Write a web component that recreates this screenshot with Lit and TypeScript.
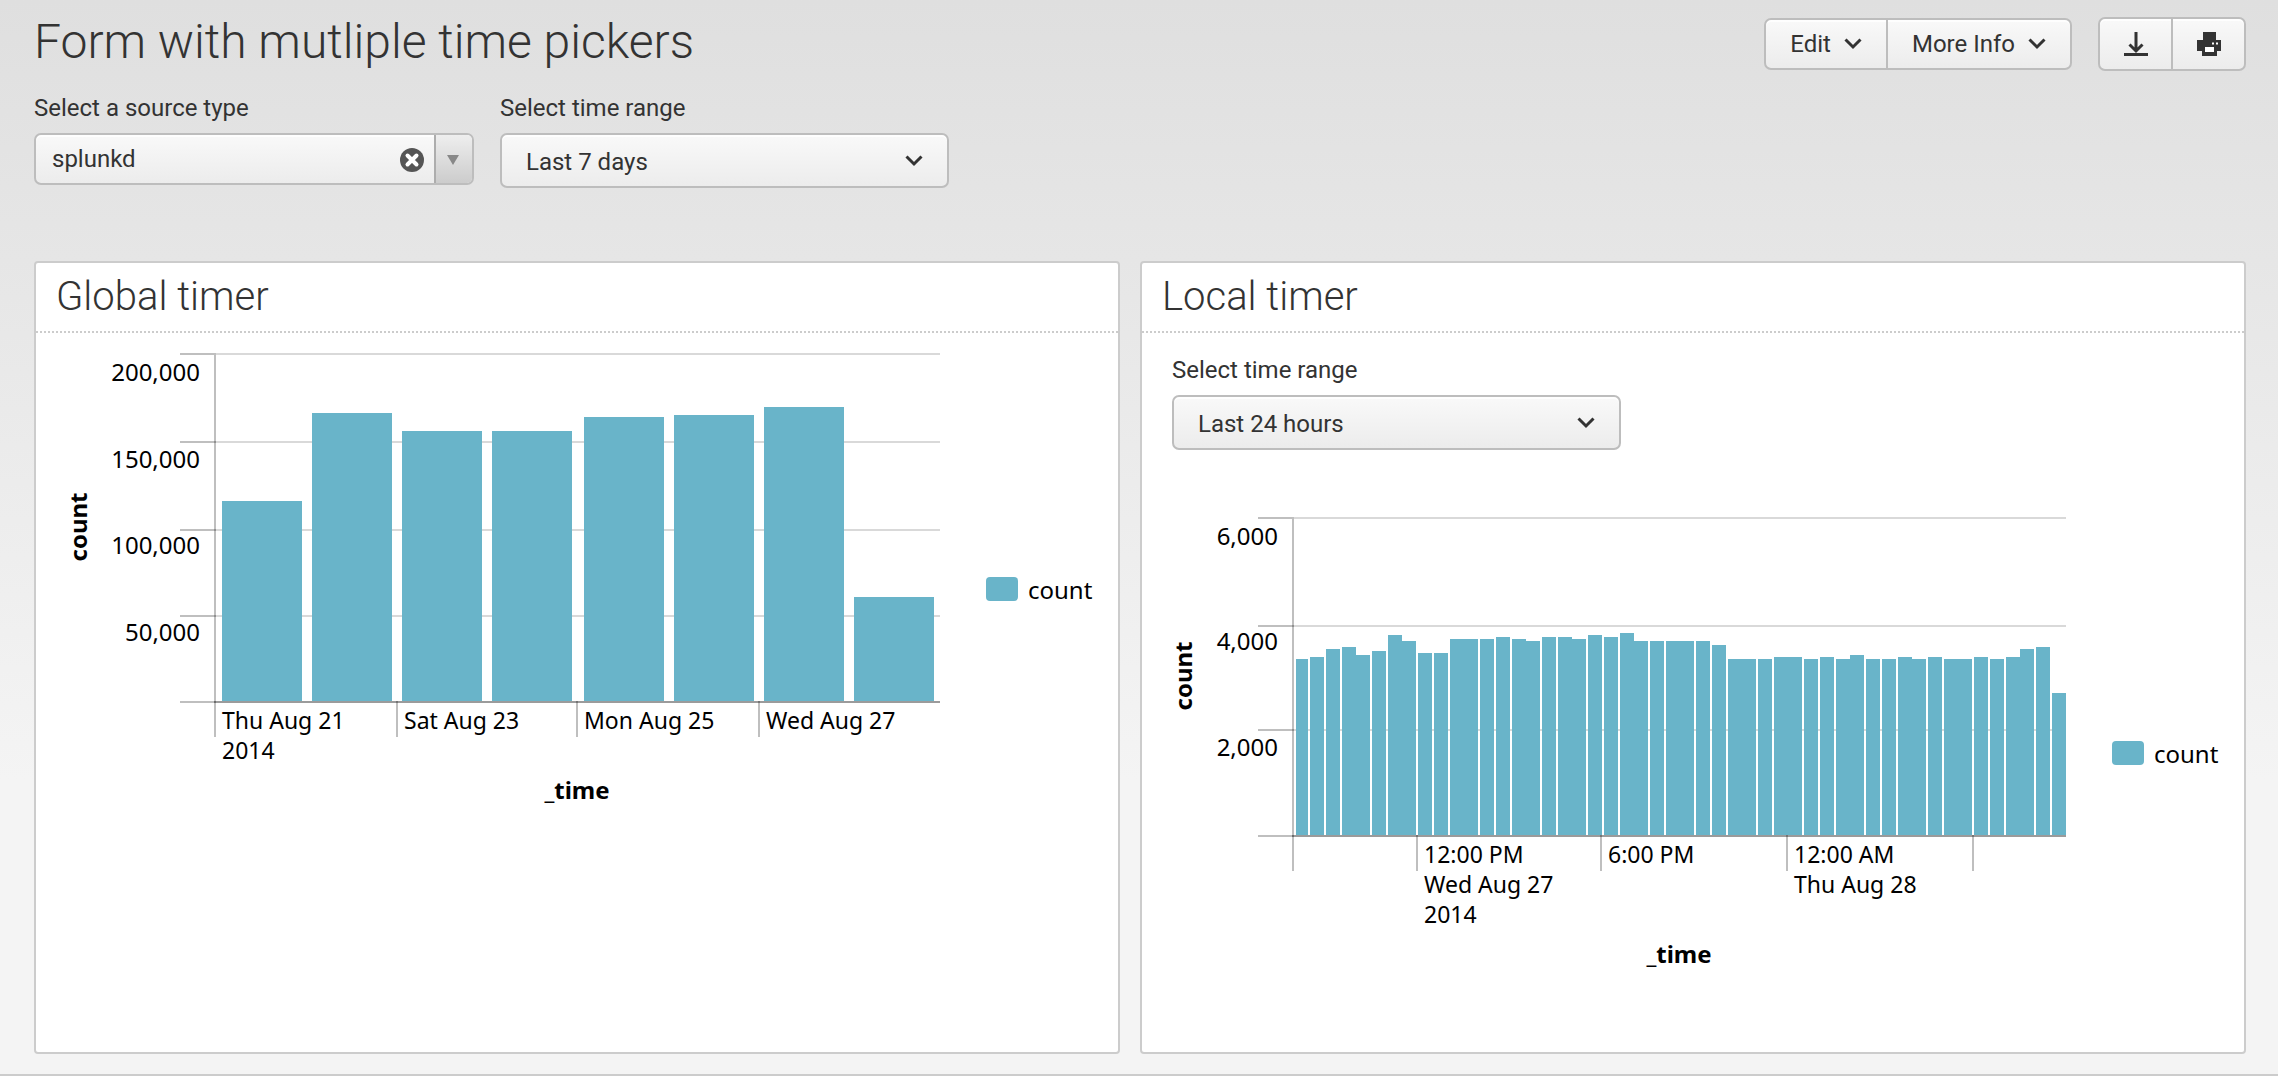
import { LitElement, html, svg, css } from "lit";
import { customElement, property } from "lit/decorators.js";

interface TickLabel {
  x: number;
  lines: string[];
}

interface ChartSpec {
  name: string;
  width: number;
  height: number;
  plotLeft: number;
  plotRight: number;
  top: number;
  base: number;
  max: number;
  barStart: number;
  barStep: number;
  barWidth: number;
  values: number[];
  grid: { y: number; label: string; baseline: number }[];
  ticks: TickLabel[];
  titleX: number;
  titleY: number;
  legendX: number;
}

const GLOBAL_CHART: ChartSpec = {
  name: "Events per day, last 7 days",
  width: 1082,
  height: 560,
  plotLeft: 178,
  plotRight: 904,
  top: 20,
  base: 368,
  max: 200000,
  barStart: 186,
  barStep: 90.5,
  barWidth: 80,
  values: [114900, 165500, 155200, 155200, 163200, 164400, 169000, 59800],
  grid: [
    { y: 20, label: "200,000", baseline: 48 },
    { y: 108, label: "150,000", baseline: 135 },
    { y: 196, label: "100,000", baseline: 221 },
    { y: 282, label: "50,000", baseline: 308 },
  ],
  ticks: [
    { x: 178, lines: ["Thu Aug 21", "2014"] },
    { x: 360, lines: ["Sat Aug 23"] },
    { x: 540, lines: ["Mon Aug 25"] },
    { x: 722, lines: ["Wed Aug 27"] },
  ],
  titleX: 51,
  titleY: 466,
  legendX: 950,
};

const LOCAL_CHART: ChartSpec = {
  name: "Events per half hour, last 24 hours",
  width: 1102,
  height: 520,
  plotLeft: 150,
  plotRight: 924,
  top: 20,
  base: 338,
  max: 6000,
  barStart: 153.88,
  barStep: 15.44,
  barWidth: 14,
  values: [
    3320, 3360, 3510, 3550, 3400, 3470, 3770, 3660, 3430, 3430,
    3700, 3700, 3700, 3740, 3700, 3660, 3740, 3740, 3700, 3770,
    3740, 3810, 3660, 3660, 3660, 3660, 3660, 3580, 3320, 3320,
    3320, 3360, 3360, 3320, 3360, 3320, 3400, 3320, 3320, 3360,
    3320, 3360, 3320, 3320, 3360, 3320, 3360, 3510, 3550, 2680,
  ],
  grid: [
    { y: 20, label: "6,000", baseline: 48 },
    { y: 128, label: "4,000", baseline: 153 },
    { y: 232, label: "2,000", baseline: 259 },
  ],
  ticks: [
    { x: 150, lines: [] },
    { x: 274, lines: ["12:00 PM", "Wed Aug 27", "2014"] },
    { x: 458, lines: ["6:00 PM"] },
    { x: 644, lines: ["12:00 AM", "Thu Aug 28"] },
    { x: 830, lines: [] },
  ],
  titleX: 50,
  titleY: 466,
  legendX: 970,
};

const chevron = html`<svg class="chevron" width="18" height="12" viewBox="0 0 18 12" aria-hidden="true">
  <path d="M1.5 1.5 L9 9 L16.5 1.5" fill="none" stroke="#333" stroke-width="3" />
</svg>`;

@customElement("column-chart")
export class ColumnChart extends LitElement {
  @property({ attribute: false }) spec!: ChartSpec;

  static styles = css`
    :host {
      display: block;
    }
    .plot {
      display: block;
      width: 100%;
      height: auto;
      font-family: "Noto Sans", "Open Sans", sans-serif;
      font-size: 24px;
      fill: #000;
    }
    .edge {
      shape-rendering: crispEdges;
    }
    .grid {
      fill: #d9d9d9;
    }
    .tick {
      fill: rgba(0, 0, 0, 0.25);
    }
    .axis {
      fill: #9b9b9b;
    }
    .bar,
    .swatch {
      fill: #69b4c9;
    }
    .time {
      font-size: 23px;
    }
    .title {
      font-weight: 700;
    }
  `;

  render() {
    const s = this.spec;
    const firstX = s.plotLeft + 4;
    const centerX = (s.plotLeft + s.plotRight) / 2;
    const centerY = (s.top + s.base) / 2;
    const legendY = s.top + 224;
    return html`
      <svg class="plot" viewBox="0 0 ${s.width} ${s.height}" role="img" aria-label=${s.name}>
        <g class="edge">
          ${s.grid.map(
            (g) => svg`
              <rect class="grid" x=${s.plotLeft + 2} y=${g.y} width=${s.plotRight - s.plotLeft - 2} height="2" />
              <rect class="tick" x=${s.plotLeft - 34} y=${g.y} width="36" height="2" />`,
          )}
          <rect class="tick" x=${s.plotLeft - 34} y=${s.base} width="36" height="2" />
          <rect class="tick" x=${s.plotLeft} y=${s.top + 2} width="2" height=${s.base - s.top} />
          ${s.values.map((v, i) => {
            const slot = 2 * Math.floor((s.barStart + i * s.barStep) / 2);
            const x = Math.max(slot, firstX);
            const h = Math.round((v / s.max) * (s.base - s.top));
            return svg`<rect class="bar" x=${x} y=${s.base - h} width=${slot + s.barWidth - x} height=${h} />`;
          })}
          <rect class="axis" x=${s.plotLeft + 2} y=${s.base} width=${s.plotRight - s.plotLeft - 2} height="2" />
          ${s.ticks.map((t) => svg`<rect class="tick" x=${t.x} y=${s.base} width="2" height="36" />`)}
        </g>
        ${s.grid.map(
          (g) => svg`<text x=${s.plotLeft - 14} y=${g.baseline} text-anchor="end">${g.label}</text>`,
        )}
        ${s.ticks.map((t) =>
          t.lines.map((line, i) => svg`<text class="time" x=${t.x + 8} y=${s.base + 28 + i * 30}>${line}</text>`),
        )}
        <text class="title" x=${centerX} y=${s.titleY} text-anchor="middle">_time</text>
        <text class="title" transform="translate(${s.titleX} ${centerY}) rotate(-90)" text-anchor="middle">count</text>
        <rect class="swatch" x=${s.legendX} y=${legendY} width="32" height="24" rx="4" />
        <text x=${s.legendX + 42} y=${legendY + 22}>count</text>
      </svg>
    `;
  }
}

@customElement("time-range")
export class TimeRange extends LitElement {
  @property() value = "";

  static styles = css`
    :host {
      display: block;
      width: 449px;
      font-family: Roboto, "Liberation Sans", sans-serif;
      font-size: 24px;
      line-height: 28px;
      color: #333;
    }
    .label {
      display: block;
      margin-bottom: 11px;
    }
    .field {
      display: grid;
      align-items: center;
    }
    .select,
    .chevron {
      grid-area: 1 / 1;
    }
    .select {
      appearance: none;
      box-sizing: border-box;
      width: 100%;
      height: 55px;
      margin: 0;
      padding: 2px 60px 0 24px;
      border: 2px solid #bdbdbd;
      border-radius: 7px;
      background: linear-gradient(#f9f9f9, #ececec);
      box-shadow: inset 0 2px 0 rgba(255, 255, 255, 0.8);
      font: inherit;
      color: inherit;
    }
    .chevron {
      justify-self: end;
      margin-right: 26px;
      pointer-events: none;
    }
  `;

  render() {
    return html`
      <label class="label" for="range">Select time range</label>
      <div class="field">
        <select class="select" id="range">
          <option selected>${this.value}</option>
        </select>
        ${chevron}
      </div>
    `;
  }
}

@customElement("app-root")
export class AppRoot extends LitElement {
  static styles = css`
    :host {
      display: block;
      box-sizing: border-box;
      min-height: 100vh;
      border-bottom: 2px solid #ccc;
      background: #f4f4f4 linear-gradient(#dfdfdf, #f4f4f4 780px);
      font-family: Roboto, "Liberation Sans", sans-serif;
      font-size: 24px;
      line-height: 28px;
      color: #333;
    }
    .page {
      padding: 17px 32px 20px 34px;
    }
    .header {
      display: flex;
      justify-content: space-between;
      align-items: flex-start;
    }
    .heading {
      margin: 0;
      font-size: 48px;
      font-weight: 300;
      line-height: 50px;
    }
    .toolbar {
      display: flex;
      align-items: center;
      gap: 26px;
    }
    .group {
      display: flex;
    }
    .button {
      display: flex;
      align-items: center;
      justify-content: center;
      gap: 13px;
      box-sizing: border-box;
      height: 52px;
      margin: 0;
      padding: 0 24px;
      border: 2px solid #bdbdbd;
      background: linear-gradient(#f9f9f9, #ececec);
      box-shadow: inset 0 2px 0 rgba(255, 255, 255, 0.8);
      font: inherit;
      color: inherit;
    }
    .button:first-child {
      border-radius: 7px 0 0 7px;
    }
    .button:last-child {
      border-left: 0;
      border-radius: 0 7px 7px 0;
    }
    .icon {
      height: 54px;
      padding: 0 23px 0 24px;
    }
    .inputs {
      display: flex;
      align-items: flex-start;
      gap: 26px;
      margin-top: 23px;
    }
    .source {
      width: 440px;
    }
    .label {
      display: block;
      margin-bottom: 11px;
    }
    .combo {
      display: grid;
      grid-template-columns: 1fr 24px 50px;
      align-items: center;
    }
    .select {
      grid-area: 1 / 1 / 2 / 4;
      appearance: none;
      box-sizing: border-box;
      width: 100%;
      height: 52px;
      margin: 0;
      padding: 0 80px 0 16px;
      border: 2px solid #bdbdbd;
      border-radius: 7px;
      background: linear-gradient(#f9f9f9, #ececec);
      box-shadow: inset 0 2px 0 rgba(255, 255, 255, 0.8);
      font: inherit;
      color: inherit;
    }
    .clear {
      grid-area: 1 / 2;
      display: flex;
      margin: 0;
      padding: 2px 0 0;
      border: 0;
      background: none;
    }
    .arrow {
      grid-area: 1 / 3;
      justify-self: end;
      display: flex;
      align-items: center;
      justify-content: center;
      box-sizing: border-box;
      width: 38px;
      height: 48px;
      margin-right: 2px;
      padding: 2px 2px 0 0;
      border-left: 2px solid #adadad;
      border-radius: 0 5px 5px 0;
      background: linear-gradient(#eee, #ccc);
      pointer-events: none;
    }
    .panels {
      display: grid;
      grid-template-columns: 1086fr 1106fr;
      gap: 20px;
      margin-top: 73px;
    }
    .panel {
      border: 2px solid #ccc;
      border-radius: 4px;
      background: #fff;
      padding-bottom: 35px;
    }
    .name {
      margin: 0;
      padding: 0 20px;
      border-bottom: 2px dotted #ccc;
      font-size: 40px;
      font-weight: 300;
      line-height: 68px;
    }
    .form {
      padding: 23px 30px 47px;
    }
  `;

  render() {
    return html`
      <main class="page">
        <header class="header">
          <h1 class="heading">Form with mutliple time pickers</h1>
          <div class="toolbar">
            <div class="group">
              <button class="button" type="button">Edit ${chevron}</button>
              <button class="button" type="button">More Info ${chevron}</button>
            </div>
            <div class="group">
              <button class="button icon" type="button" aria-label="Download">
                <svg width="24" height="24" viewBox="0 0 24 24" aria-hidden="true">
                  <path d="M12 0v19M5.5 12.5 12 19l6.5-6.5" fill="none" stroke="#333" stroke-width="3" />
                  <path d="M0 21h24v3H0z" fill="#333" />
                </svg>
              </button>
              <button class="button icon" type="button" aria-label="Print">
                <svg width="24" height="24" viewBox="0 0 24 24" aria-hidden="true">
                  <path d="M6 0h13v8h5v11h-4v5H5v-5H0V8h6z" fill="#333" />
                  <path d="M8 15h9v5H8zM15 10.500h2v2h-2zM19 10.500h2v2h-2z" fill="#fff" />
                </svg>
              </button>
            </div>
          </div>
        </header>

        <section class="inputs">
          <div class="source">
            <label class="label" for="source">Select a source type</label>
            <div class="combo">
              <select class="select" id="source">
                <option selected>splunkd</option>
              </select>
              <button class="clear" type="button" aria-label="Clear source type">
                <svg width="24" height="24" viewBox="0 0 24 24" aria-hidden="true">
                  <circle cx="12" cy="12" r="12" fill="#555" />
                  <path d="M7.500 7.500l9 9M16.500 7.500l-9 9" stroke="#fff" stroke-width="4" stroke-linecap="round" />
                </svg>
              </button>
              <span class="arrow">
                <svg width="12" height="10" viewBox="0 0 12 10" aria-hidden="true">
                  <path d="M0 0h12L6 10z" fill="#888" />
                </svg>
              </span>
            </div>
          </div>
          <time-range value="Last 7 days"></time-range>
        </section>

        <section class="panels">
          <article class="panel">
            <h2 class="name">Global timer</h2>
            <column-chart .spec=${GLOBAL_CHART}></column-chart>
          </article>
          <article class="panel">
            <h2 class="name">Local timer</h2>
            <div class="form"><time-range value="Last 24 hours"></time-range></div>
            <column-chart .spec=${LOCAL_CHART}></column-chart>
          </article>
        </section>
      </main>
    `;
  }
}
